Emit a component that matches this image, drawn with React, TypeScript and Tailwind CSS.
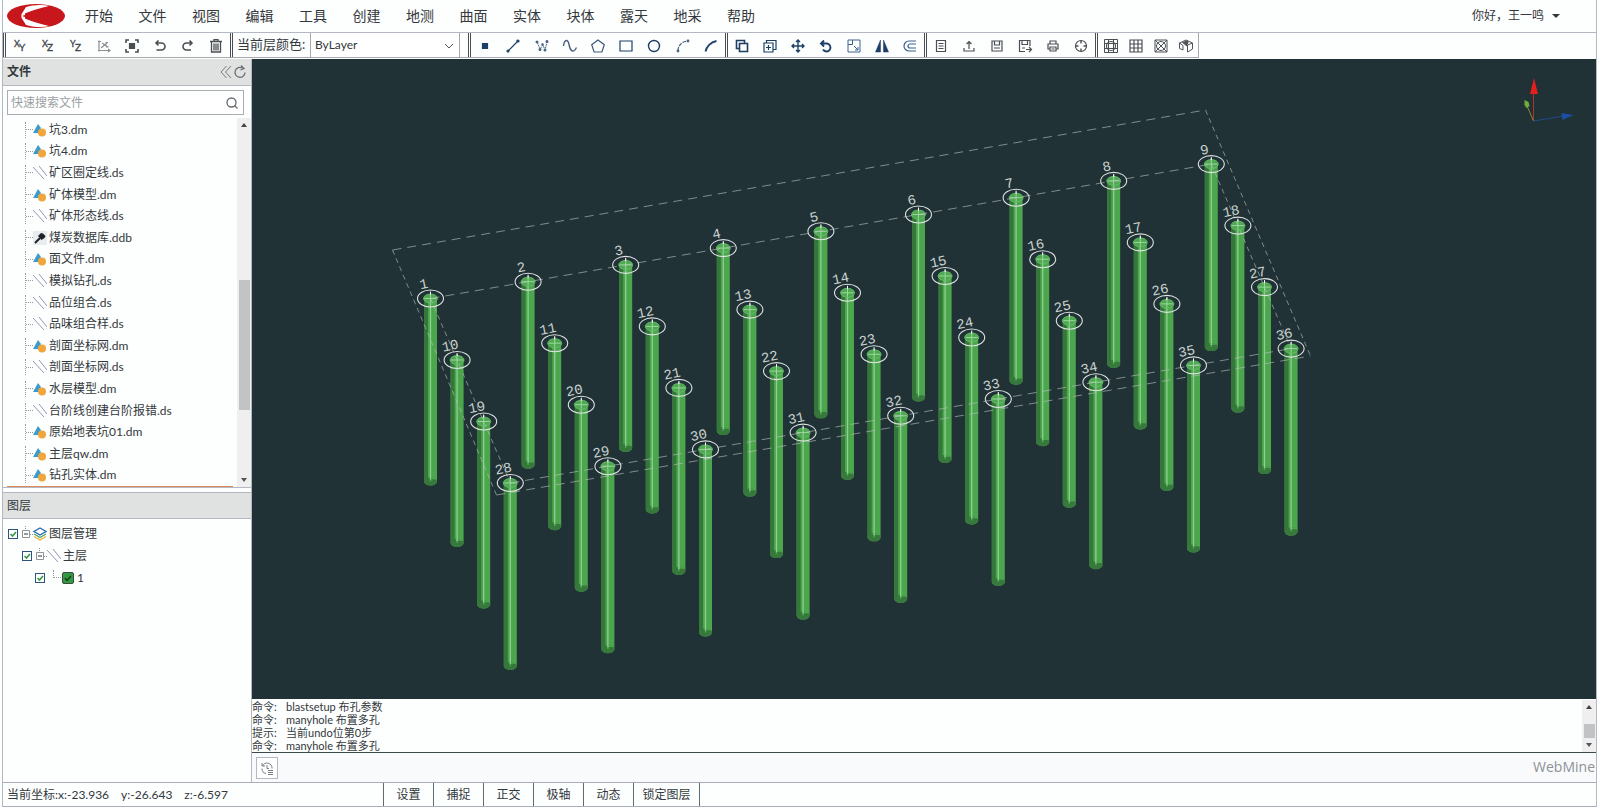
import type { ReactNode } from "react";

const menus = ["开始", "文件", "视图", "编辑", "工具", "创建", "地测", "曲面", "实体", "块体", "露天", "地采", "帮助"];

const files = [
  "坑3.dm",
  "坑4.dm",
  "矿区圈定线.ds",
  "矿体模型.dm",
  "矿体形态线.ds",
  "煤炭数据库.ddb",
  "面文件.dm",
  "模拟钻孔.ds",
  "品位组合.ds",
  "品味组合样.ds",
  "剖面坐标网.dm",
  "剖面坐标网.ds",
  "水层模型.dm",
  "台阶线创建台阶报错.ds",
  "原始地表坑01.dm",
  "主层qw.dm",
  "钻孔实体.dm",
];

const logs = [
  ["命令:", "blastsetup 布孔参数"],
  ["命令:", "manyhole 布置多孔"],
  ["提示:", "当前undo位第0步"],
  ["命令:", "manyhole 布置多孔"],
];

const modes = ["设置", "捕捉", "正交", "极轴", "动态"];

function Icon({ children, className = "text-[#4a4f54]" }: { children: ReactNode; className?: string }) {
  return (
    <svg viewBox="0 0 16 16" className={`h-4 w-4 ${className}`} fill="none" stroke="currentColor" strokeWidth="1.2">
      {children}
    </svg>
  );
}

function AxisIcon({ a, b }: { a: string; b: string }) {
  return (
    <svg viewBox="0 0 16 16" className="h-4 w-4" fill="#3d4247" stroke="#3d4247" strokeWidth=".3">
      <text x="2" y="9" fontSize="9">{a}</text>
      <text x="7" y="13" fontSize="10">{b}</text>
    </svg>
  );
}

const navy = "text-[#1d3f66]";

const viewTools: [string, ReactNode][] = [
  ["XY视图", <AxisIcon a="X" b="Y" />],
  ["XZ视图", <AxisIcon a="X" b="Z" />],
  ["YZ视图", <AxisIcon a="Y" b="Z" />],
  ["坐标视图", <Icon className="text-[#8a8f94]"><path d="M3 2.500v11M2 3.500h3M2 12.500h12M12 11l2 1.500-2 1.500M5 10l6-5M6 5l6 4M9.500 4.500h2.500M10 9h2.500" /></Icon>],
  ["全屏", <Icon><path d="M2 5V2h3M11 2h3v3M14 11v3h-3M5 14H2v-3" strokeWidth="1.600" /><path d="M5.500 5.500h5v5h-5z" fill="currentColor" /></Icon>],
  ["撤销", <Icon><path d="M3.500 5h6a3.500 3.500 0 0 1 0 7H4.500M6.500 2.500L4 5l2.500 2.500" strokeWidth="1.600" /></Icon>],
  ["重做", <Icon><path d="M12.500 5h-6a3.500 3.500 0 0 0 0 7H11M9.500 2.500L12 5 9.500 7.500" strokeWidth="1.600" /></Icon>],
  ["删除", <Icon><path d="M2 3.500h12M6 3.500V1.700h4v1.800M3.500 3.500V14h9V3.500M6 5.500v7M8 5.500v7M10 5.500v7" strokeWidth="1.300" /></Icon>],
];

const drawTools: [string, ReactNode][] = [
  ["点", <Icon className={navy}><path d="M5.500 5.500h5v5h-5z" fill="currentColor" /></Icon>],
  ["直线", <Icon className={navy}><path d="M3 13L13 3" /><circle cx="3" cy="13" r="1" fill="currentColor" /><circle cx="13" cy="3" r="1" fill="currentColor" /></Icon>],
  ["多段线", <Icon className="text-[#4a6380]"><path d="M3 4l3 7L9 7l2 5 2-8" strokeDasharray="2 .8" strokeWidth="1" /><circle cx="3" cy="4" r=".9" fill="currentColor" /><circle cx="6" cy="11.500" r=".9" fill="currentColor" /><circle cx="8.500" cy="6.500" r=".7" fill="currentColor" /><circle cx="11" cy="12" r=".9" fill="currentColor" /><circle cx="13" cy="3.500" r=".9" fill="currentColor" /></Icon>],
  ["样条曲线", <Icon className="text-[#4a6380]"><path d="M1.500 8C2.500 1 6 1 7 6.500s4 10 7.500 3" strokeWidth="1.400" /></Icon>],
  ["多边形", <Icon className="text-[#3d5878]"><path d="M8 2l6.300 4.700-2.400 7.300H4.100L1.700 6.700z" /></Icon>],
  ["矩形", <Icon className={navy}><path d="M2 3h12v10H2z" /></Icon>],
  ["圆", <Icon className={navy}><circle cx="8" cy="8" r="5.500" strokeWidth="1.400" /></Icon>],
  ["圆弧", <Icon className="text-[#4a6380]"><path d="M3 13c0-6 4-9.500 10-10" strokeDasharray="4 1" /><circle cx="3" cy="13" r=".8" fill="currentColor" /><circle cx="13" cy="3" r=".8" fill="currentColor" /></Icon>],
  ["弧线", <Icon className={navy}><path d="M2.500 13.500c1-4.500 5-9.500 11-10.500" strokeWidth="1.800" /></Icon>],
];

const editTools: [string, ReactNode][] = [
  ["复制", <Icon className={navy}><path d="M5.500 10.500h-3v-8h8v3" strokeWidth="1.600" /><path d="M5.500 5.500h8v8h-8z" strokeWidth="1.600" /></Icon>],
  ["多重复制", <Icon className={navy}><path d="M2 5h9v9H2zM4.500 5V2.500H14v9h-3M6.500 7v5M4 9.500h5" /></Icon>],
  ["移动", <Icon className={navy}><path d="M8 2v12M2 8h12M6 4l2-2 2 2M6 12l2 2 2-2M4 6L2 8l2 2M12 6l2 2-2 2" strokeWidth="1.400" /></Icon>],
  ["旋转", <Icon className={navy}><path d="M3.500 5.500H9a4 4 0 1 1-4 6M6 2.500l-3 3 3 3" strokeWidth="1.900" /></Icon>],
  ["缩放", <Icon className="text-[#3d6290]"><path d="M2 2h12v12H2zM2 6.500h4.500V2M8 8l4 4M12 9v3H9" strokeWidth="1" /></Icon>],
  ["镜像", <Icon className={navy}><path d="M6.500 2v12h-5zM9.500 2v12h5z" fill="currentColor" strokeWidth=".5" /></Icon>],
  ["偏移", <Icon className="text-[#3d6290]"><path d="M14 3H7a5 5 0 0 0 0 10h7M14 6H8a2 2 0 0 0 0 4h6" /></Icon>],
];

const fileTools: [string, ReactNode][] = [
  ["新建", <Icon><path d="M3.500 2.500h9v11h-9zM5.500 5.500h5M5.500 8h5M5.500 10.500h5" /></Icon>],
  ["导出", <Icon><path d="M8 11V3.500M5.500 6L8 3.500 10.500 6M3 10v3h10v-3" /></Icon>],
  ["保存", <Icon><path d="M3 3h10v10H3zM5.500 3v4h5V3M5 10h6" /></Icon>],
  ["另存为", <Icon><path d="M13 8V2.500H2.500v11H8M5 2.500v4h5.500v-4M5 10h3M9 11.500h5M12 9l2.500 2.500L12 14" /></Icon>],
  ["打印", <Icon><path d="M5 6V3h6v3M5 11H3V6h10v5h-2M5 9h6v4H5zM6.500 11h3" /></Icon>],
  ["定位", <Icon><circle cx="8" cy="8" r="5.500" /><path d="M8 2.500v3M8 10.500v3M2.500 8h3M10.500 8h3" strokeWidth="1.400" /></Icon>],
];

const gridTools: [string, ReactNode][] = [
  ["球面网格", <Icon><path d="M1.500 1.500h13v13h-13zM1.500 5.500h13M1.500 10.500h13M5.500 1.500v13M10.500 1.500v13" strokeWidth="1" /><circle cx="8" cy="8" r="4.500" /></Icon>],
  ["网格", <Icon><path d="M2 2h12v12H2zM2 6h12M2 10h12M6 2v12M10 2v12" /></Icon>],
  ["线框", <Icon><path d="M2 2h12v12H2zM2 2l12 12M14 2L2 14" strokeWidth="1" /><circle cx="8" cy="8" r="4.500" strokeWidth="1" /></Icon>],
  ["三维", <Icon className="text-[#4f5458]"><path d="M1.500 5L8 2l6.500 3v6L9.500 14V7M1.500 5v5.500L5 12V7.500L1.500 5M9.500 7l5-2" strokeWidth="1" /><path d="M5 4.500l4-1.500 1 1-1.500 3.500z" fill="currentColor" /></Icon>],
];

function ToolGroup({ tools, className }: { tools: [string, ReactNode][]; className: string }) {
  return (
    <div className={`flex items-stretch border-l-3 border-double border-[#4b4f54] ${className}`}>
      {tools.map(([label, icon]) => (
        <button key={label} type="button" aria-label={label} className="flex flex-1 items-center justify-center pt-[2px]">
          {icon}
        </button>
      ))}
    </div>
  );
}

function FileIcon({ name }: { name: string }) {
  if (name.endsWith(".ds")) return <LinesIcon />;
  if (name.endsWith(".ddb")) {
    return (
      <svg viewBox="0 0 14 14" className="h-[14px] w-[14px] shrink-0 bg-[#e9ecef]">
        <path d="M2 12l5-5" stroke="#1c2227" strokeWidth="2" />
        <path d="M5 5l3-3 2 .5L12.500 5l-1 2-3 2z" fill="#1c2227" />
      </svg>
    );
  }
  return (
    <svg viewBox="0 0 14 14" className="h-[14px] w-[14px] shrink-0">
      <path d="M5 1l3 4-3 5H0z" fill="#3d9bcb" />
      <circle cx="9" cy="9.500" r="4" fill="#f0a63c" />
    </svg>
  );
}

function LinesIcon() {
  return (
    <svg viewBox="0 0 14 14" className="h-[14px] w-[14px] shrink-0" stroke="#868cab" strokeWidth=".9">
      <path d="M0 1l11 12M6 0l8 10" />
    </svg>
  );
}

function LayersIcon() {
  return (
    <svg viewBox="0 0 14 14" className="h-[14px] w-[14px] shrink-0" fill="none" strokeWidth="1.400">
      <path d="M1 9.500l6 3.500 6-3.500" stroke="#e9b23c" />
      <path d="M1 7l6 3.500L13 7" stroke="#4fa56b" />
      <path d="M7 1l6 3.500L7 8 1 4.500z" stroke="#2b6cb8" fill="#fff" />
    </svg>
  );
}

function TreeCheck({ label }: { label: string }) {
  return (
    <span className="relative flex h-[10px] w-[10px] shrink-0">
      <input
        type="checkbox"
        defaultChecked
        aria-label={label}
        className="peer h-[10px] w-[10px] appearance-none border border-[#2d5480] bg-white"
      />
      <svg viewBox="0 0 10 10" className="pointer-events-none absolute inset-0 hidden peer-checked:block" fill="none" stroke="#2f9a3f" strokeWidth="1.600">
        <path d="M2.500 5l2 2 3.500-4" />
      </svg>
    </span>
  );
}

function Collapse() {
  return (
    <svg viewBox="0 0 12 16" className="h-4 w-3 shrink-0" fill="none" stroke="#8f9499">
      <path d="M4.500 0v4M9 8.500h3" strokeDasharray="1 1" />
      <path d="M1.500 4.500h7v7h-7z" />
      <path d="M3 8h4" stroke="#333" />
    </svg>
  );
}

const WIDTH = 1345;
const HEIGHT = 640;

// top-left hole and the projected steps along a row and between rows
const holes = Array.from({ length: 36 }, (_, i) => {
  const col = i % 9;
  const row = Math.floor(i / 9);
  return {
    id: i + 1,
    x: 179 + col * 97.6 + row * 26.6,
    y: 239.5 + col * -16.8 + row * 61.5,
  };
});

function Scene() {
  return (
    <svg viewBox={`0 0 ${WIDTH} ${HEIGHT}`} preserveAspectRatio="xMidYMid slice" className="h-full w-full">
      {holes.map(({ id, x, y }) => (
        <g key={id} transform={`translate(${x} ${y})`}>
          <path d="M-6.500 0v183a6.500 4 0 0 0 13 0V0z" fill="#4ca64e" />
          <path d="M-6.500 0v183l4 3V0z" fill="#35763a" />
          <ellipse cy="183" rx="6.500" ry="4" fill="#37793c" />
          <path d="M0 183v-3h5.500" stroke="#4ca64e" strokeWidth="1.500" fill="none" />
          <path d="M0 0v181" stroke="#8ed090" strokeWidth="1.300" />
          <ellipse rx="7" ry="4.500" fill="#4ea951" stroke="#6cc06e" strokeWidth=".8" />
          <path d="M-6 0H6M0-6v10" stroke="#a4dca6" strokeWidth=".9" />
          <path d="M0-7v3" stroke="#fff" />
        </g>
      ))}
      <g fill="none" stroke="#b9c0bf" strokeWidth=".9" strokeDasharray="9 6" opacity=".7">
        <path d="M141 191L954 51" />
        <path d="M179 239.500L959.800 105.100" />
        <path d="M245 436L1059 297" />
        <path d="M258.800 424L1039.600 289.600" />
      </g>
      <g fill="none" stroke="#b9c0bf" strokeWidth=".9" strokeDasharray="5 4" opacity=".7">
        <path d="M141 191L245 436" />
        <path d="M954 51L1059 297" />
        <path d="M179 239.500L258.800 424" />
        <path d="M959.800 105.100L1039.600 289.600" />
      </g>
      {holes.map(({ id, x, y }) => (
        <g key={id} transform={`translate(${x} ${y})`}>
          <ellipse rx="13" ry="8.500" fill="none" stroke="#dde2e0" strokeWidth="1.100" />
          <text transform="translate(-6 -10) rotate(-12)" textAnchor="middle" fontSize="14" fill="#ccd2d1" fontFamily="Liberation Mono, monospace">
            {id}
          </text>
        </g>
      ))}
      {/* axis gizmo */}
      <g transform="translate(1282 62)">
        <path d="M0 0v-30" stroke="#b5322c" />
        <path d="M.5-43l4 16h-8z" fill="#e3201c" />
        <path d="M0 0l-6-14" stroke="#8a8a35" />
        <path d="M-9-21l4 2 1 4-3 2-2-3z" fill="#6fae3c" />
        <path d="M0 0l30-5" stroke="#1e4a8c" />
        <path d="M28-8l12 2-11 5z" fill="#1c4fa3" />
      </g>
    </svg>
  );
}

function Scrollbar({ thumb }: { thumb: string }) {
  return (
    <div aria-hidden="true" className="flex w-[14px] shrink-0 flex-col items-center bg-[#efeff0]">
      <svg viewBox="0 0 14 14" className="h-[14px] w-[14px]"><path d="M4 9l3-4 3 4z" fill="#444" /></svg>
      <div className={`w-[11px] bg-[#c2c3c4] ${thumb}`} />
      <svg viewBox="0 0 14 14" className="mt-auto h-[14px] w-[14px]"><path d="M4 5l3 4 3-4z" fill="#555" /></svg>
    </div>
  );
}

export default function App() {
  return (
    <div className="h-screen min-h-[600px] bg-[#fdfefe] pr-[3px] pl-[2px] text-xs text-[#33383c] [font-family:Lato,'Noto_Sans_CJK_SC',sans-serif]">
      <div className="flex h-full flex-col border-x border-[#b4b8c2]">
        <header className="flex h-8 shrink-0 items-center pl-[3px] text-sm">
          <svg viewBox="0 0 60 26" className="h-[26px] w-[60px]" role="img" aria-label="WebMine">
            <ellipse cx="30" cy="13" rx="29" ry="12" fill="#c8161d" />
            <path d="M15 12L20 4C26 2 36 1 43 3 34 5 24 8 15 12z" fill="#fff" />
            <path d="M15 14l5 8c6 2 16 3 23 1-9-2-19-5-28-9z" fill="#fff" />
            <path d="M15 13l4-6v12z" fill="#fff" />
            <path d="M16 13L43 4v18z" fill="#c8161d" />
          </svg>
          <nav className="ml-[19px] flex w-[670px] justify-between">
            {menus.map((item) => (
              <button key={item} type="button">{item}</button>
            ))}
          </nav>
          <button type="button" className="mr-9 ml-auto flex items-center gap-2 text-xs">
            你好，王一鸣
            <svg viewBox="0 0 8 4" className="h-1 w-2"><path d="M0 0h8L4 4z" fill="#33383c" /></svg>
          </button>
        </header>

        <div className="flex h-[27px] shrink-0 items-stretch border-t border-[#b4b8c2] pb-px">
          <div className="flex border-r border-b border-[#a5a9ad]">
            <ToolGroup tools={viewTools} className="w-[227px]" />
            <div className="flex w-[238px] items-center border-l-3 border-double border-[#4b4f54] pl-1">
              <label htmlFor="layer-color" className="w-[73px] text-[13px]">当前层颜色:</label>
              <div className="relative flex h-full">
                <select id="layer-color" className="h-full w-[150px] appearance-none border-x border-[#a5a9ad] bg-white pl-1 text-xs">
                  <option>ByLayer</option>
                </select>
                <svg viewBox="0 0 10 6" className="pointer-events-none absolute top-[10px] right-[6px] h-[6px] w-[10px]" fill="none" stroke="#555">
                  <path d="M1 1l4 4 4-4" />
                </svg>
              </div>
            </div>
            <ToolGroup tools={drawTools} className="w-[257px]" />
            <ToolGroup tools={editTools} className="w-[199px]" />
            <ToolGroup tools={fileTools} className="w-[171px]" />
            <ToolGroup tools={gridTools} className="w-[103px]" />
          </div>
        </div>

        <div className="flex min-h-0 flex-1">
          <aside className="flex w-[249px] shrink-0 flex-col border-r border-[#b4b8c2]">
            <section className="flex h-[429px] flex-col border-b border-[#b4b8c2]">
              <div className="flex h-[27px] shrink-0 items-center border-b border-[#b4b8c2] bg-[#e0e1e1] pr-1 pl-1">
                <h2 className="font-bold">文件</h2>
                <button type="button" aria-label="收起" className="ml-auto">
                  <svg viewBox="0 0 14 14" className="h-[14px] w-[14px]" fill="none" stroke="#777c80"><path d="M7.500 1L2 7l5.500 6M12 1L6.500 7l5.500 6" /></svg>
                </button>
                <button type="button" aria-label="刷新">
                  <svg viewBox="0 0 14 14" className="h-[14px] w-[14px]" fill="none" stroke="#6c7175" strokeWidth="1.300"><path d="M9.500 3A5 5 0 1 0 12 7.500M8 .5L11 3.500 7.500 5" /></svg>
                </button>
              </div>
              <div className="shrink-0 px-1 pt-1 pb-[3px]">
                <div className="flex h-[25px] w-[237px] items-center border border-[#a9adb2] bg-white pr-[5px] pl-[3px]">
                  <input aria-label="快速搜索文件" placeholder="快速搜索文件" className="min-w-0 flex-1 outline-none placeholder:text-[#9a9fa3]" />
                  <svg viewBox="0 0 12 12" className="h-3 w-3" fill="none" stroke="#666b70" strokeWidth="1.300"><circle cx="5.500" cy="5.500" r="4.500" /><path d="M8.500 8.500L11.500 11.500" /></svg>
                </div>
              </div>
              <div className="flex min-h-0 flex-1">
                <ul className="ml-1 flex flex-1 flex-col overflow-hidden border-b border-[#e08a5c] pt-px">
                  {files.map((name) => (
                    <li key={name} className="flex min-h-0 flex-1 items-center pl-[18px]">
                      <span className="h-4 border-l border-dotted border-[#999]" />
                      <span className="w-[7px] border-t border-dotted border-[#999]" />
                      <FileIcon name={name} />
                      <span className="ml-[2px] leading-4">{name}</span>
                    </li>
                  ))}
                </ul>
                <div className="ml-1 flex">
                  <Scrollbar thumb="mt-[148px] h-[130px]" />
                </div>
              </div>
            </section>

            <section className="mt-1 flex-1 border-t border-[#b4b8c2]">
              <h2 className="flex h-[26px] items-center border-b border-[#b4b8c2] bg-[#e0e1e1] pl-1">图层</h2>
              <ul className="pt-1">
                <li className="flex h-[22px] items-center pl-[5px]">
                  <TreeCheck label="图层管理" />
                  <span className="ml-[3px] flex items-center"><Collapse /><LayersIcon /></span>
                  <span className="ml-[2px]">图层管理</span>
                </li>
                <li className="flex h-[22px] items-center pl-[19px]">
                  <TreeCheck label="主层" />
                  <span className="ml-[3px] flex items-center"><Collapse /><LinesIcon /></span>
                  <span className="ml-[2px]">主层</span>
                </li>
                <li className="flex h-[22px] items-center pl-8">
                  <TreeCheck label="1" />
                  <span className="mb-2 ml-2 h-2 w-2 border-b border-l border-dotted border-[#999]" />
                  <svg viewBox="0 0 12 12" className="ml-px h-3 w-3">
                    <rect x=".5" y=".5" width="11" height="11" rx="1.500" fill="#2f9a3f" stroke="#3f4a42" />
                    <path d="M3 6l2 2.500L9 4" fill="none" stroke="#123818" strokeWidth="1.300" />
                  </svg>
                  <span className="ml-[3px]">1</span>
                </li>
              </ul>
            </section>
          </aside>

          <main className="flex min-w-0 flex-1 flex-col">
            <div className="min-h-0 flex-1 bg-[#203236]">
              <Scene />
            </div>
            <div className="flex h-[54px] shrink-0 border-b border-[#3d4a4d] pt-px">
              <dl className="flex-1 text-[11px] leading-[13px]">
                {logs.map(([kind, text], i) => (
                  <div key={i} className="flex">
                    <dt className="w-[34px]">{kind}</dt>
                    <dd>{text}</dd>
                  </div>
                ))}
              </dl>
              <Scrollbar thumb="mt-[10px] h-[14px]" />
            </div>
            <div className="flex h-[29px] shrink-0 items-center bg-[#f9fafb] pl-1">
              <button type="button" aria-label="历史命令" className="flex h-[22px] w-[22px] items-center justify-center border border-[#b4b8c2] bg-white">
                <svg viewBox="0 0 14 14" className="h-[14px] w-[14px]" fill="none" stroke="#777c80">
                  <path d="M2 2v3h3M2.500 5a5 5 0 0 1 9.500 2.500M2 7.500A5 5 0 0 0 6 12.500M7 4v3.500h2M8 9.500h5M8 11.500h5M8 13.500h5" />
                </svg>
              </button>
              <input aria-label="命令输入" className="h-full min-w-0 flex-1 px-2 outline-none" />
              <span className="pr-px text-[14px] text-[#8e9296] [font-family:'Open_Sans',sans-serif]">WebMine</span>
            </div>
          </main>
        </div>

        <footer className="flex h-[25px] shrink-0 items-stretch border-y border-[#a9adb8]">
          <div className="flex w-[381px] items-center gap-3 border-r border-[#5d6b73] pl-1">
            <span>当前坐标:x:-23.936</span>
            <span>y:-26.643</span>
            <span>z:-6.597</span>
          </div>
          {modes.map((mode) => (
            <button key={mode} type="button" className="w-[50px] border-r border-[#5d6b73]">{mode}</button>
          ))}
          <button type="button" className="w-[66px] border-r border-[#5d6b73]">锁定图层</button>
        </footer>
      </div>
    </div>
  );
}
